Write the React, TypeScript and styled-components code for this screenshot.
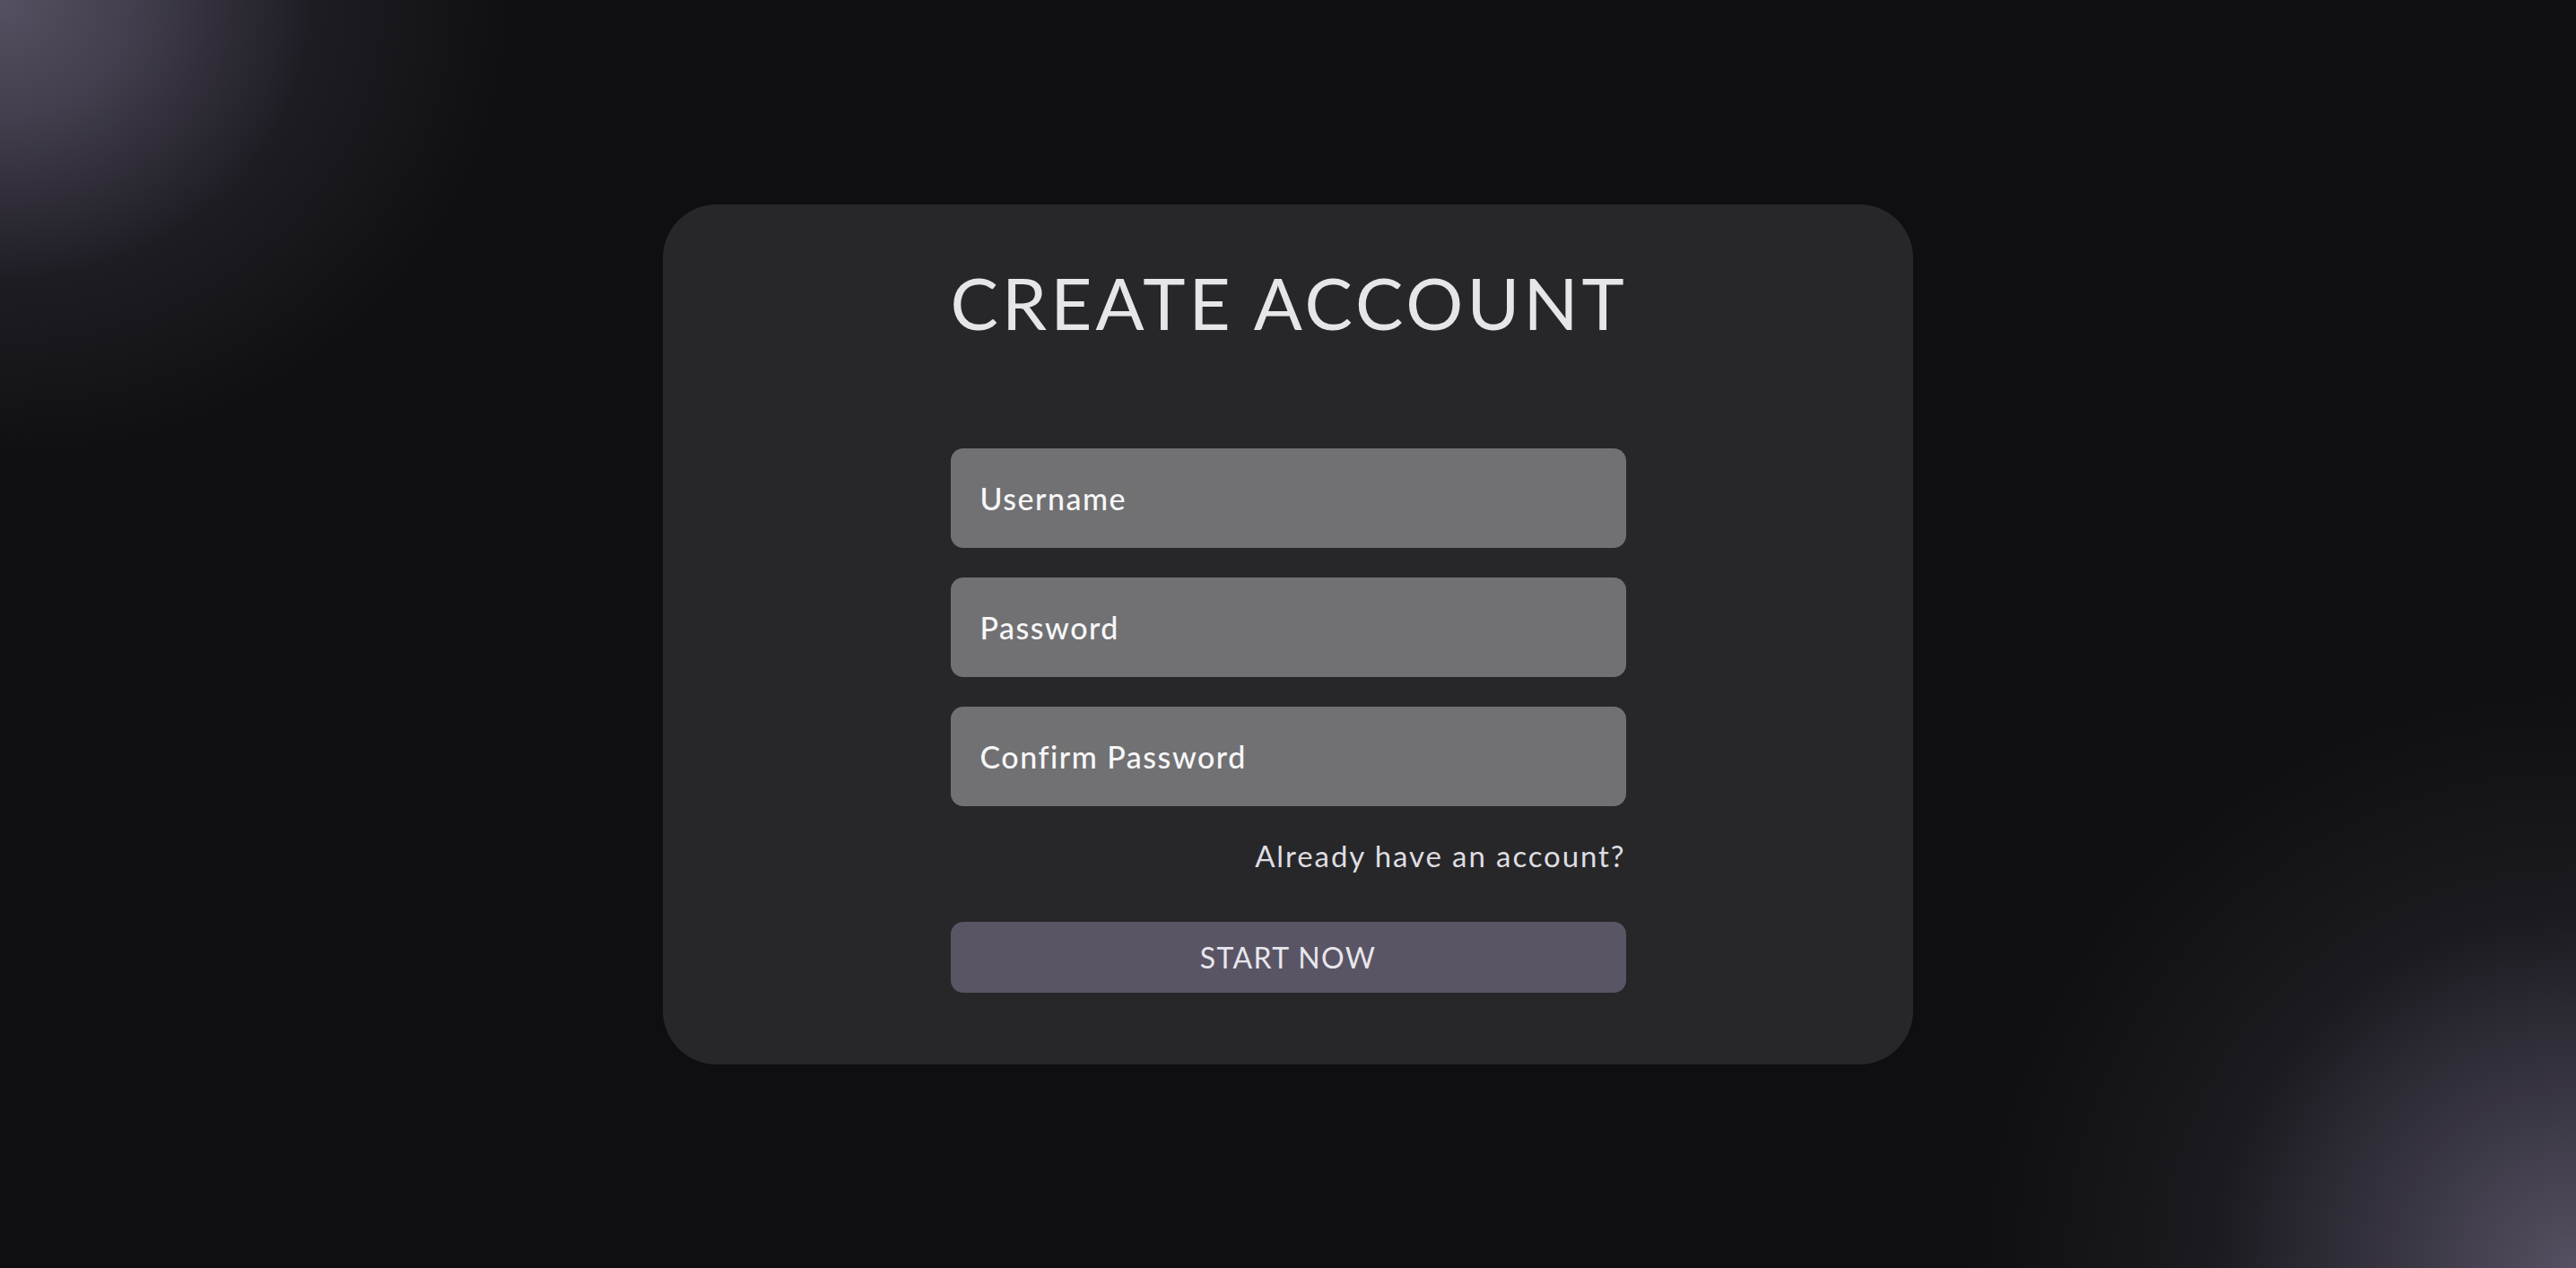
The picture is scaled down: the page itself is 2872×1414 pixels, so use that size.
import React from "react";
import styled, { createGlobalStyle } from "styled-components";

const GlobalStyle = createGlobalStyle`
  html, body {
    margin: 0;
    padding: 0;
    background: #0f0f11;
  }
  * {
    box-sizing: border-box;
  }
`;

const Page = styled.div`
  width: 100%;
  min-height: 100vh;
  display: flex;
  align-items: center;
  justify-content: center;
  font-family: "Lato", "Liberation Sans", sans-serif;
  background:
    radial-gradient(ellipse 580px 520px at 0% 0%, rgba(86, 80, 98, 1) 0%, rgba(76, 71, 88, 0.85) 25%, rgba(45, 42, 54, 0.5) 60%, rgba(15, 15, 17, 0) 100%),
    radial-gradient(ellipse 680px 660px at 100% 100%, rgba(86, 80, 98, 1) 0%, rgba(72, 68, 84, 0.8) 25%, rgba(42, 40, 50, 0.45) 60%, rgba(15, 15, 17, 0) 100%),
    #0f0f11;
`;

const Card = styled.form`
  width: 1394px;
  padding: 61px 0 80px;
  border-radius: 60px;
  background: #272729;
  display: flex;
  flex-direction: column;
  align-items: center;
`;

const Column = styled.div`
  width: 753px;
  display: flex;
  flex-direction: column;
`;

const Heading = styled.h1`
  margin: 0 0 115px;
  font-size: 80px;
  line-height: 96px;
  font-weight: 400;
  letter-spacing: 4.1px;
  color: #e6e5ea;
  text-align: center;
  white-space: nowrap;
`;

const Fields = styled.div`
  display: flex;
  flex-direction: column;
  gap: 33px;
`;

const Field = styled.input`
  width: 100%;
  height: 111px;
  padding: 0 33px;
  border: none;
  outline: none;
  border-radius: 14px;
  background: #717173;
  color: #ffffff;
  font-family: inherit;
  font-size: 34px;
  font-weight: 500;
  letter-spacing: 1.5px;
  &::placeholder {
    color: #f7f7f8;
    opacity: 1;
  }
`;

const SwitchLink = styled.a`
  align-self: flex-end;
  margin: 37px 0 56px;
  font-size: 33px;
  line-height: 36px;
  letter-spacing: 1.9px;
  color: #dedde2;
  text-decoration: none;
  cursor: pointer;
`;

const Submit = styled.button`
  width: 100%;
  height: 79px;
  border: none;
  border-radius: 14px;
  background: #595565;
  color: #e8e6ec;
  font-family: inherit;
  font-size: 32px;
  font-weight: 400;
  letter-spacing: 1.4px;
  cursor: pointer;
`;

const App: React.FC = () => {
  return (
    <Page>
      <GlobalStyle />
      <Card onSubmit={(e) => e.preventDefault()}>
        <Column>
          <Heading>CREATE ACCOUNT</Heading>
          <Fields>
            <Field type="text" placeholder="Username" />
            <Field type="password" placeholder="Password" />
            <Field type="password" placeholder="Confirm Password" />
          </Fields>
          <SwitchLink>Already have an account?</SwitchLink>
          <Submit type="submit">START NOW</Submit>
        </Column>
      </Card>
    </Page>
  );
};

export default App;
